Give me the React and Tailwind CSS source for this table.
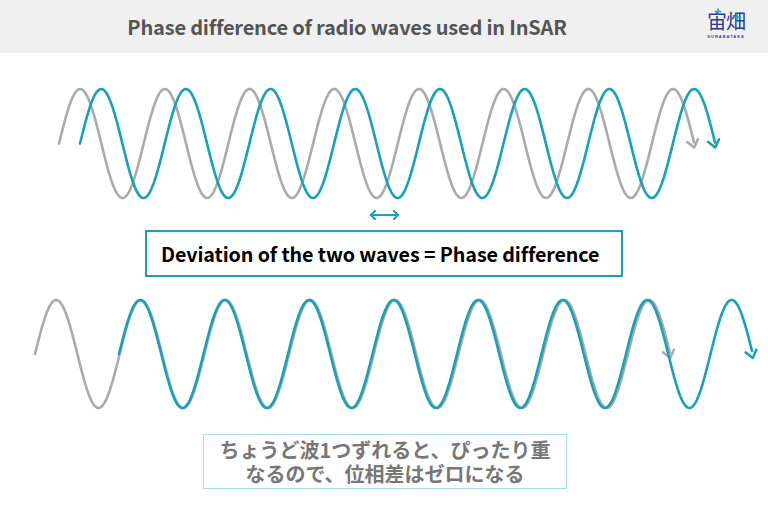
const TEAL = '#17a2b8';
const GRAY = '#ababab';

// sine path starting at center line going up, length in periods
function wavePath(x0, cy, amp, period, periods) {
  const k = (2 * Math.PI) / period;
  const end = x0 + period * periods;
  let d = `M ${x0} ${cy}`;
  for (let x = x0 + 1; x <= end; x += 1) {
    d += ` L ${x.toFixed(1)} ${(cy - amp * Math.sin(k * (x - x0))).toFixed(2)}`;
  }
  return { d, end };
}

function arrowHead(x, y, amp, period, len = 9) {
  const k = (2 * Math.PI) / period;
  const dx = 1;
  const dy = amp * k; // slope at the down crossing
  const n = Math.hypot(dx, dy);
  const ux = dx / n;
  const uy = dy / n;
  const a = (38 * Math.PI) / 180;
  const rot = (s) => [
    -(ux * Math.cos(s * a) - uy * Math.sin(s * a)) * len,
    -(ux * Math.sin(s * a) + uy * Math.cos(s * a)) * len,
  ];
  const [ax, ay] = rot(1);
  const [bx, by] = rot(-1);
  return `M ${x + ax} ${y + ay} L ${x} ${y} L ${x + bx} ${y + by}`;
}

function Wave({ x0, cy, amp, period, periods, color }) {
  const { d, end } = wavePath(x0, cy, amp, period, periods);
  return (
    <g fill="none" stroke={color} strokeWidth="2.6" strokeLinecap="round" strokeLinejoin="round">
      <path d={d} />
      <path d={arrowHead(end, cy + 4, amp, period)} />
    </g>
  );
}

function Logo() {
  return (
    <div className="relative flex flex-col items-center">
      <div className="relative text-[20px] leading-[20px] font-normal tracking-[-1px] text-[#2e3a8c] [font-family:'Noto_Sans_CJK_JP',sans-serif]">
        宙畑
        {/* teal sparkles */}
        <svg width="40" height="24" className="absolute -left-[1px] -top-[3px] pointer-events-none" fill="none" stroke="#18a8c0" strokeWidth="1.6" strokeLinecap="round">
          <path d="M 12 1 L 12 6 M 9.5 3.5 L 14.5 3.5" />
          <path d="M 31 6 L 31 12 M 28 9 L 34 9" />
        </svg>
      </div>
      <span className="mt-[3px] text-[4px] leading-[5px] font-bold tracking-[1px] text-[#2e3a8c] [font-family:'Liberation_Sans',sans-serif]">
        SORABATAKE
      </span>
    </div>
  );
}

export default function App() {
  return (
    <div className="w-[768px] h-[515px] bg-white overflow-hidden [font-family:'Noto_Sans_CJK_JP',sans-serif]">
      {/* Title bar */}
      <header className="h-[53px] bg-[#f0f0f0] flex items-center relative">
        <h1 className="w-full text-center pr-[74px] text-[20px] font-bold text-[#555555] tracking-[-0.2px]">
          Phase difference of radio waves used in InSAR
        </h1>
        <div className="absolute right-[23px] top-[11px]">
          <Logo />
        </div>
      </header>

      {/* Shifted waves */}
      <svg width="768" height="177" className="block">
        <Wave x0={59} cy={90.5} amp={54.5} period={84.7} periods={7.5} color={GRAY} />
        <Wave x0={80} cy={90.5} amp={54.5} period={84.7} periods={7.5} color={TEAL} />
        <g fill="none" stroke={TEAL} strokeWidth="2.2" strokeLinecap="round" strokeLinejoin="round">
          <path d="M 371 162 L 398 162" />
          <path d="M 375 158 L 371 162 L 375 166" />
          <path d="M 394 158 L 398 162 L 394 166" />
        </g>
      </svg>

      <div className="ml-[145px] w-[478px] h-[47px] border-2 border-[#17a2b8] flex items-center pl-[14px]">
        <p className="text-[19.7px] font-bold text-black tracking-[-0.1px]">
          Deviation of the two waves = Phase difference
        </p>
      </div>

      {/* Overlapping waves */}
      <svg width="768" height="157" className="block">
        <Wave x0={35} cy={77} amp={54} period={84.7} periods={7.5} color={GRAY} />
        <Wave x0={119} cy={77} amp={54} period={84.5} periods={7.5} color={TEAL} />
      </svg>

      <div className="ml-[203px] w-[364px] h-[55px] border-[1.5px] border-[#a6dde6] flex flex-col items-center justify-center">
        <p className="text-[20px] leading-[24px] font-bold text-[#777777] text-center">
          ちょうど波1つずれると、ぴったり重
          <br />
          なるので、位相差はゼロになる
        </p>
      </div>
    </div>
  );
}
